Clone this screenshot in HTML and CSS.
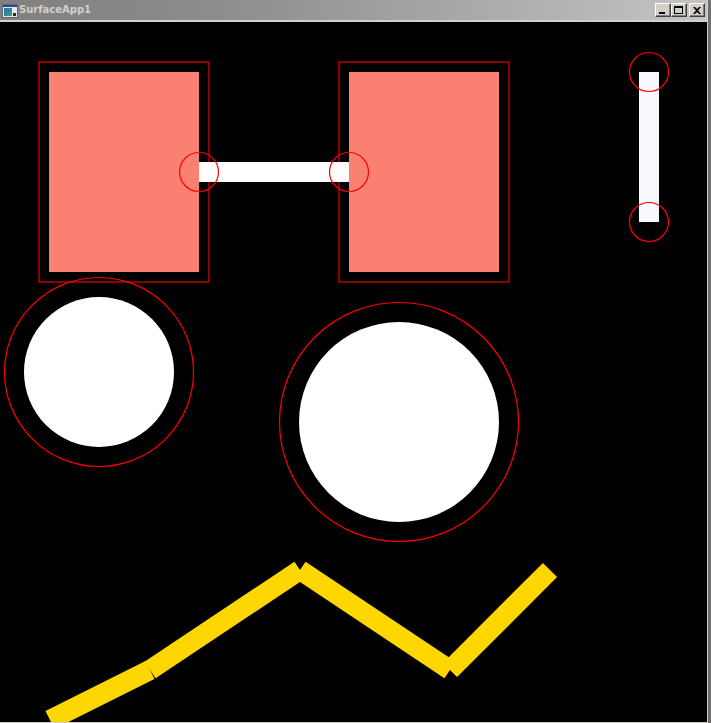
FILE: index.html
```html
<!DOCTYPE html>
<html>
<head>
<meta charset="utf-8">
<title>SurfaceApp1</title>
<link rel="stylesheet" href="styles.css">
</head>
<body>
<div class="window">
  <div class="main">
    <div class="titlebar">
      <svg class="app-icon" width="16" height="16" viewBox="0 0 16 16">
        <defs>
          <linearGradient id="ig" x1="0" y1="0" x2="1" y2="1">
            <stop offset="0" stop-color="#2a6fb8"/>
            <stop offset="1" stop-color="#3aa07a"/>
          </linearGradient>
        </defs>
        <rect x="0.5" y="1.5" width="15" height="13" fill="#e8e8e8" stroke="#5a6a78"/>
        <rect x="1" y="2" width="14" height="2" fill="#1e4f9a"/>
        <rect x="2" y="5" width="8" height="8" fill="url(#ig)"/>
        <rect x="11" y="10" width="3" height="3" fill="#2a2a2a"/>
      </svg>
      <span class="title">SurfaceApp1</span>
      <div class="caption-buttons">
        <div class="cbtn"><span class="min-glyph"></span></div>
        <div class="cbtn"><span class="max-glyph"></span></div>
        <div class="cbtn close">
          <svg width="8" height="7" viewBox="0 0 8 7"><path d="M0 0 L2 0 L4 2 L6 0 L8 0 L5 3.5 L8 7 L6 7 L4 5 L2 7 L0 7 L3 3.5 Z" fill="#000"/></svg>
        </div>
      </div>
    </div>
    <div class="title-sep"></div>
    <svg class="canvas" width="707" height="700" viewBox="0 22 707 700">
      <rect x="39" y="62" width="170" height="220" fill="none" stroke="#8b0000" stroke-width="2"/>
      <rect x="49" y="72" width="150" height="200" fill="#fa8072"/>
      <rect x="339" y="62" width="170" height="220" fill="none" stroke="#8b0000" stroke-width="2"/>
      <rect x="349" y="72" width="150" height="200" fill="#fa8072"/>
      <rect x="199" y="162" width="150" height="20" fill="#ffffff"/>
      <circle cx="199" cy="172" r="19.5" fill="none" stroke="#ff0000" stroke-width="1.2"/>
      <circle cx="349" cy="172" r="19.5" fill="none" stroke="#ff0000" stroke-width="1.2"/>
      <rect x="639" y="72" width="20" height="150" fill="#f8f8ff"/>
      <circle cx="649" cy="72" r="19.5" fill="none" stroke="#ff0000" stroke-width="1.2"/>
      <circle cx="649" cy="222" r="19.5" fill="none" stroke="#ff0000" stroke-width="1.2"/>
      <circle cx="99" cy="372" r="75" fill="#ffffff"/>
      <circle cx="99" cy="372" r="94.5" fill="none" stroke="#ff0000" stroke-width="1.2"/>
      <circle cx="399" cy="422" r="100" fill="#ffffff"/>
      <circle cx="399" cy="422" r="119.5" fill="none" stroke="#ff0000" stroke-width="1.2"/>
      <g stroke="#ffd700" stroke-width="20" stroke-linecap="butt" fill="none">
        <line x1="50" y1="720" x2="150" y2="670"/>
        <line x1="150" y1="670" x2="300" y2="570"/>
        <line x1="300" y1="570" x2="450" y2="670"/>
        <line x1="450" y1="670" x2="550" y2="570"/>
      </g>
    </svg>
    <div class="bottom-edge"></div>
  </div>
  <div class="right-frame"></div>
</div>
</body>
</html>
```

FILE: styles.css
```css
html, body {
  margin: 0;
  padding: 0;
  background: #000;
}

.window {
  display: flex;
  width: 711px;
  height: 723px;
  overflow: hidden;
}

.main {
  display: flex;
  flex-direction: column;
  width: 707px;
}

.titlebar {
  display: flex;
  align-items: center;
  height: 20px;
  padding-left: 2px;
  background: linear-gradient(to right, #808080 0%, #8c8c8c 30%, #b0b0b0 75%, #c4c4c4 100%);
  box-sizing: border-box;
}

.app-icon {
  flex: none;
  display: block;
  margin-top: 1px;
}

.title {
  margin-left: 1px;
  font-family: "DejaVu Sans", Verdana, sans-serif;
  font-weight: bold;
  font-size: 10px;
  color: #d4d0c8;
  line-height: 20px;
}

.caption-buttons {
  display: flex;
  margin-left: auto;
  margin-right: 2px;
}

.cbtn {
  width: 16px;
  height: 14px;
  box-sizing: border-box;
  background: #d4d0c8;
  border-top: 1px solid #ffffff;
  border-left: 1px solid #ffffff;
  border-right: 1px solid #404040;
  border-bottom: 1px solid #404040;
  box-shadow: inset -1px -1px 0 #808080;
  display: flex;
  align-items: center;
  justify-content: center;
}

.cbtn.close {
  margin-left: 2px;
}

.min-glyph {
  display: block;
  width: 6px;
  height: 2px;
  background: #000;
  margin-top: 6px;
  margin-right: 2px;
}

.max-glyph {
  display: block;
  width: 9px;
  height: 8px;
  box-sizing: border-box;
  border: 1px solid #000;
  border-top-width: 2px;
  margin-right: 1px;
}

.cbtn.close svg {
  display: block;
  margin-right: 1px;
}

.title-sep {
  height: 2px;
  background: #d4d0c8;
}

.canvas {
  display: block;
  flex: none;
  background: #000;
}

.bottom-edge {
  height: 1px;
  background: #d4d0c8;
}

.right-frame {
  width: 4px;
  box-sizing: border-box;
  border-left: 1px solid #d4d0c8;
  background: #6e6e6e;
}
```
